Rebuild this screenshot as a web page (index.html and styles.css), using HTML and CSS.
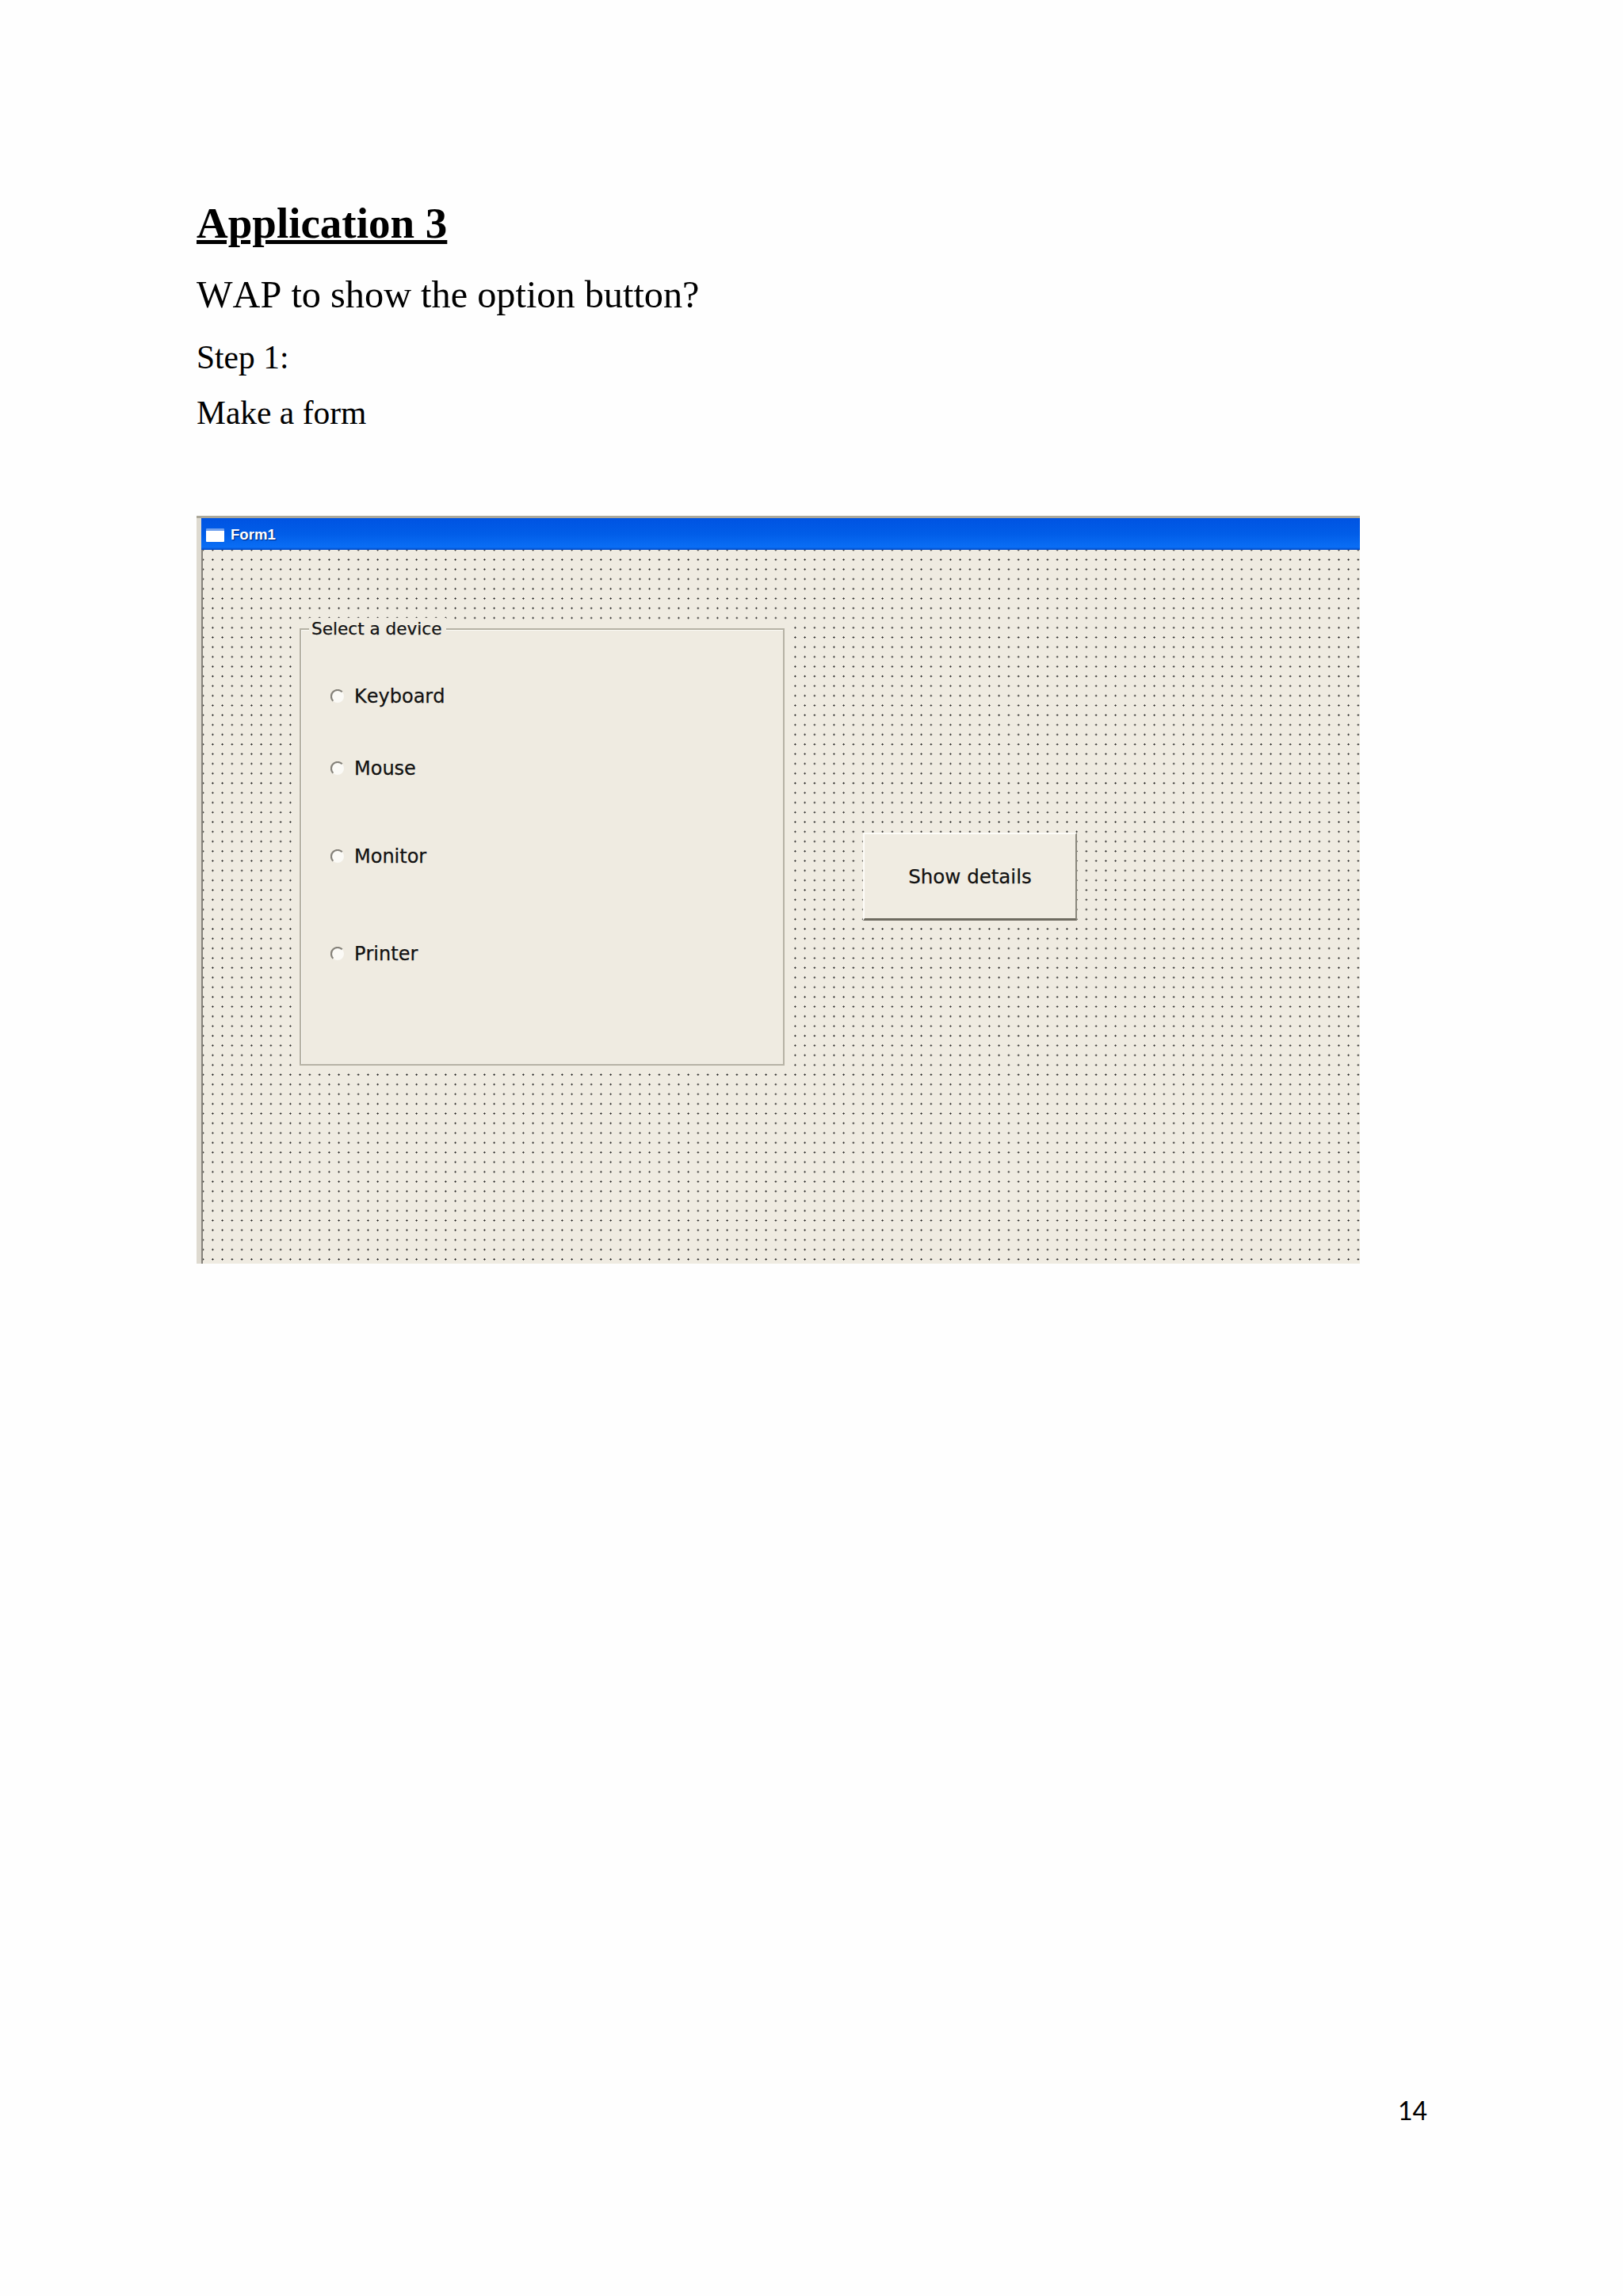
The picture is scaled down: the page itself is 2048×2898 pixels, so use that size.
FILE: index.html
```html
<!DOCTYPE html>
<html lang="en">
  <head>
    <meta charset="UTF-8" />
    <title>Application 3</title>
    <link rel="stylesheet" href="styles.css">
  </head>

  <body>
    <div class="page">
      <h1 class="app-title">Application 3</h1>
      <p class="question">WAP to show the option button?</p>
      <p class="step">Step 1:</p>
      <p class="step step-last">Make a form</p>

      <!-- VB form designer screenshot -->
      <div class="form-window">
        <div class="title-bar">
          <span class="title-icon"></span>
          <span class="title-text">Form1</span>
        </div>
        <div class="form-body">
          <div class="group-box">
            <span class="group-label">Select a device</span>
            <div class="radio-row"><svg class="radio" viewBox="0 0 18 18"><circle cx="9" cy="9" r="8" fill="#fbfaf6"/><path d="M3.3 14.7A8 8 0 0 1 14.7 3.3" fill="none" stroke="#85827a" stroke-width="2.2"/></svg>Keyboard</div>
            <div class="radio-row"><svg class="radio" viewBox="0 0 18 18"><circle cx="9" cy="9" r="8" fill="#fbfaf6"/><path d="M3.3 14.7A8 8 0 0 1 14.7 3.3" fill="none" stroke="#85827a" stroke-width="2.2"/></svg>Mouse</div>
            <div class="radio-row"><svg class="radio" viewBox="0 0 18 18"><circle cx="9" cy="9" r="8" fill="#fbfaf6"/><path d="M3.3 14.7A8 8 0 0 1 14.7 3.3" fill="none" stroke="#85827a" stroke-width="2.2"/></svg>Monitor</div>
            <div class="radio-row"><svg class="radio" viewBox="0 0 18 18"><circle cx="9" cy="9" r="8" fill="#fbfaf6"/><path d="M3.3 14.7A8 8 0 0 1 14.7 3.3" fill="none" stroke="#85827a" stroke-width="2.2"/></svg>Printer</div>
          </div>
          <button class="show-btn">Show details</button>
        </div>
      </div>

      <div class="page-number">14</div>
    </div>
  </body>
</html>
```

FILE: styles.css
```css
:root {
  --form-bg: #efebe1;
  --text-main: #000000;
  --ui-text: #111111;
  --edge-gray: #aca899;
}

* {
  box-sizing: border-box;
  margin: 0;
  padding: 0;
}

body {
  background-color: #fefefe;
  color: var(--text-main);
  font-family: "Liberation Serif", serif;
  font-kerning: none;
}

.page {
  height: 2898px;
  padding: 247px 0 0 248px;
}

/* headings */
.app-title {
  font-size: 55px;
  line-height: 70px;
  font-weight: bold;
  text-decoration: underline;
}

.question {
  font-size: 48.3px;
  line-height: 60px;
  margin-top: 25px;
}

.step {
  font-size: 41.5px;
  line-height: 50px;
  margin-top: 24px;
}

.step-last {
  margin-top: 20px;
}

/* form window */
.form-window {
  width: 1468px;
  height: 944px;
  margin-top: 105px;
  background: #dedad0;
  border-top: 3px solid var(--edge-gray);
  padding-left: 8px;
  position: relative;
}

.title-bar {
  height: 40px;
  margin-left: -2px;
  padding-left: 6px;
  padding-top: 2px;
  display: flex;
  align-items: center;
  gap: 8px;
  background: linear-gradient(#0053e2, #015de8 50%, #0a6ef5 92%, #0047c4);
}

.title-icon {
  width: 23px;
  height: 17px;
  background: #ffffff;
  border-top: 3px solid #6fa0ee;
  border-radius: 1px;
}

.title-text {
  color: #ffffff;
  font-family: "Liberation Sans", sans-serif;
  font-size: 18.6px;
  font-weight: bold;
  text-shadow: 1px 1px 1px #00277a;
}

.form-body {
  height: 901px;
  margin-left: -2px;
  padding: 99px 0 0 122px;
  display: flex;
  align-items: flex-start;
  border-left: 2px solid #85827a;
  background-color: var(--form-bg);
  background-image: radial-gradient(circle, #111111 0.8px, transparent 1.3px);
  background-size: 12.25px 12.27px;
  background-position: -6px -6px;
  font-family: "DejaVu Sans", sans-serif;
  color: var(--ui-text);
  -webkit-text-stroke: 0.25px var(--ui-text);
}

/* option frame */
.group-box {
  width: 612px;
  height: 552px;
  padding: 69px 0 0 37px;
  display: grid;
  grid-template-rows: 91px 111px 123px 30px;
  border: 2px solid #b6b2a5;
  background: var(--form-bg);
  box-shadow: inset 1px 1px 0 #fbfaf5, 0 0 0 8px var(--form-bg);
  position: relative;
}

.group-label {
  position: absolute;
  top: -15px;
  left: 10px;
  padding: 0 5px 0 3px;
  font-size: 21.6px;
  line-height: 28px;
  background: var(--form-bg);
}

.radio-row {
  height: 30px;
  display: flex;
  align-items: center;
  gap: 12px;
  font-size: 24px;
}

.radio {
  width: 18px;
  height: 18px;
}

/* command button */
.show-btn {
  width: 270px;
  height: 111px;
  margin: 258px 0 0 99px;
  font-family: inherit;
  font-size: 24.5px;
  color: var(--ui-text);
  -webkit-text-stroke: inherit;
  background: #f0ece2;
  border: none;
  border-top: 2px solid #fdfcf8;
  border-left: 2px solid #fdfcf8;
  border-right: 2px solid #8a877c;
  border-bottom: 3px solid #6e6b60;
}

.page-number {
  position: absolute;
  left: 1764px;
  top: 2644px;
  font-family: "Lato", sans-serif;
  font-size: 32px;
  line-height: 40px;
}
```
